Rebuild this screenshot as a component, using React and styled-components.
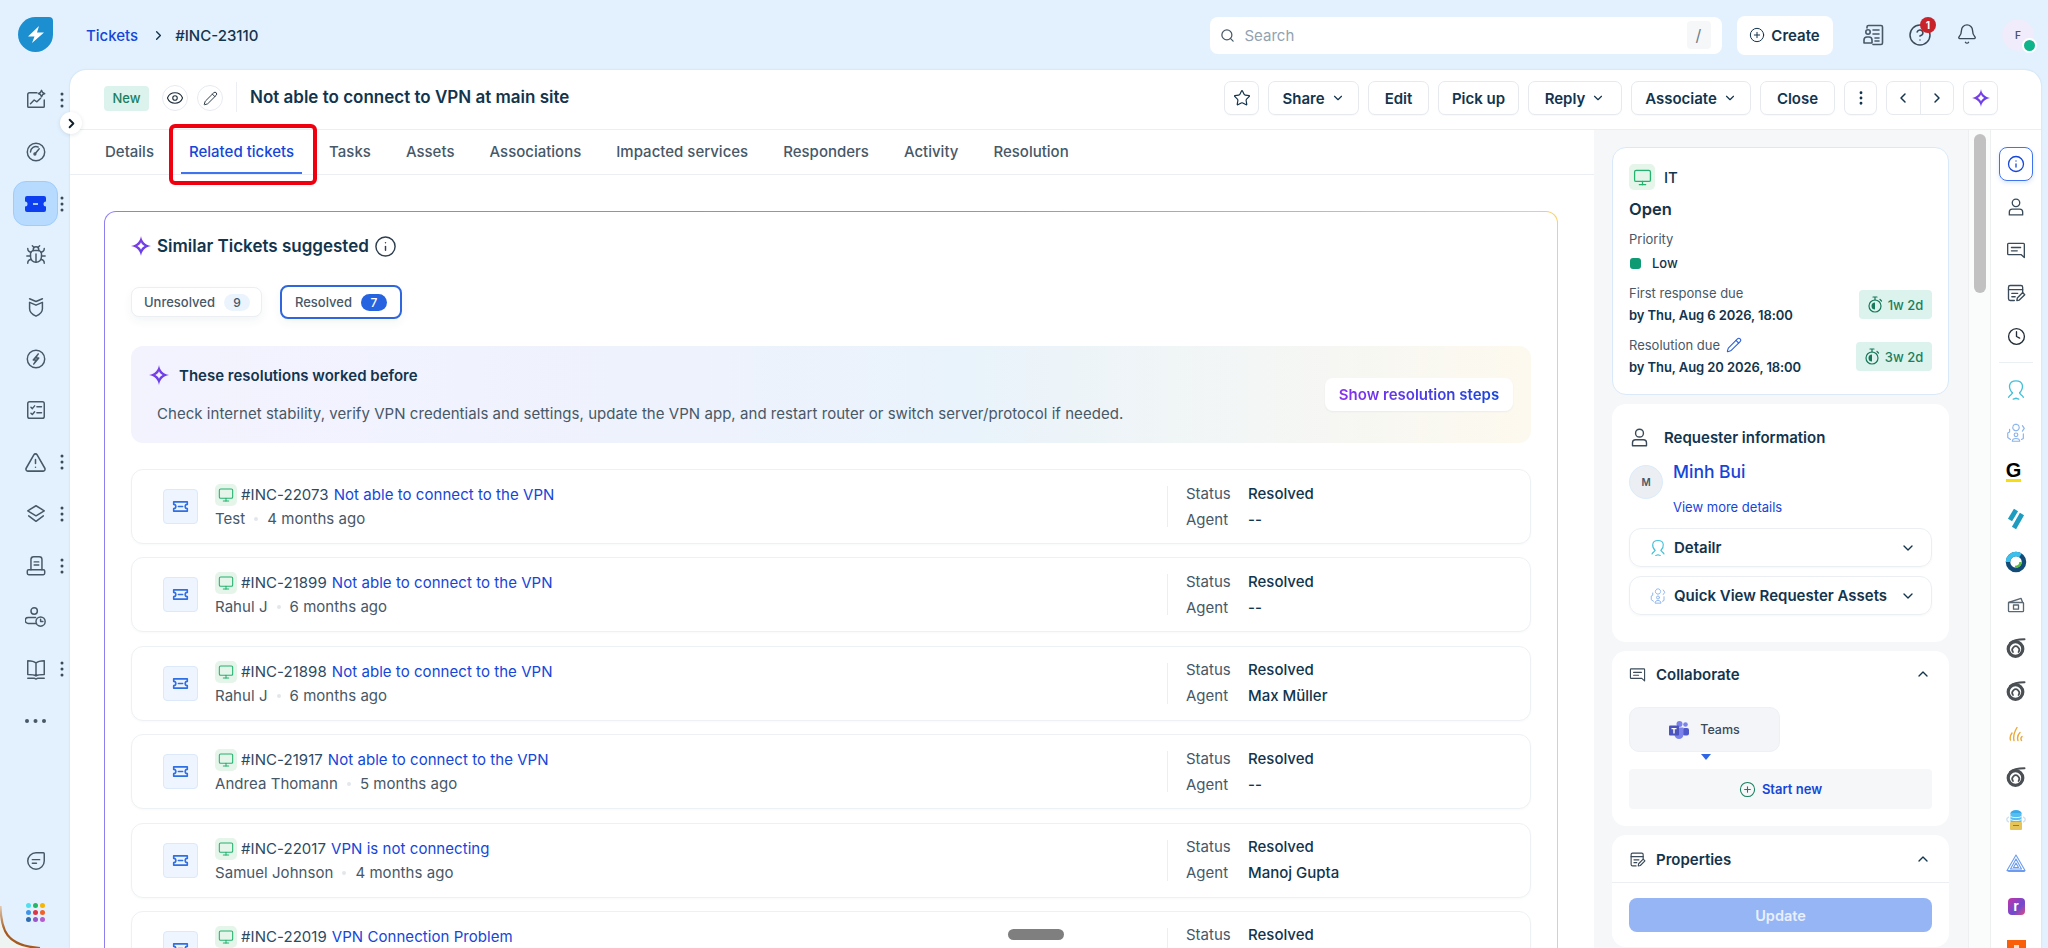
import styled, { createGlobalStyle } from 'styled-components'
import {
  Bug, TriangleAlert, Search, CirclePlus, HelpCircle, Bell, Star, ChevronDown, ChevronUp, ChevronLeft,
  ChevronRight, EllipsisVertical, Eye, Pencil, Info, Monitor, Clock,
} from 'lucide-react'

const INK = '#12344d'
const GREY = '#475867'
const LINK = '#1546d8'

const GlobalStyle = createGlobalStyle`
  html, body { margin: 0; padding: 0; }
  body { font-family: Inter, "Noto Sans", sans-serif; color: ${INK}; background: #e3f1fe; }
  * { box-sizing: border-box; }
`

const tickets = [
  { id: '#INC-22073', title: 'Not able to connect to the VPN', who: 'Test', when: '4 months ago', agent: '--' },
  { id: '#INC-21899', title: 'Not able to connect to the VPN', who: 'Rahul J', when: '6 months ago', agent: '--' },
  { id: '#INC-21898', title: 'Not able to connect to the VPN', who: 'Rahul J', when: '6 months ago', agent: 'Max Müller' },
  { id: '#INC-21917', title: 'Not able to connect to the VPN', who: 'Andrea Thomann', when: '5 months ago', agent: '--' },
  { id: '#INC-22017', title: 'VPN is not connecting', who: 'Samuel Johnson', when: '4 months ago', agent: 'Manoj Gupta' },
  { id: '#INC-22019', title: 'VPN Connection Problem' },
]

const tabs = ['Details', 'Related tickets', 'Tasks', 'Assets', 'Associations', 'Impacted services', 'Responders', 'Activity', 'Resolution']

const Svg = ({ size = 22, children, vb = '0 0 24 24', stroke = GREY, sw = 1.6 }) => (
  <svg width={size} height={size} viewBox={vb} fill="none" stroke={stroke} strokeWidth={sw} strokeLinecap="round" strokeLinejoin="round">
    {children}
  </svg>
)

const Logo = () => (
  <svg width="35" height="35" viewBox="0 0 35 35">
    <path d="M17.5 0H31a4 4 0 0 1 4 4v13.5A17.5 17.5 0 1 1 17.5 0z" fill="#1b8fd0" />
    <path d="M21 9L10 19.500h6.500l-2.500 6.500L26 15.500h-7z" fill="#fff" />
  </svg>
)

const ChartIcon = () => (
  <Svg><path d="M13 4H5a2 2 0 0 0-2 2v13a1 1 0 0 0 1 1h16a1 1 0 0 0 1-1v-7" /><path d="M6 16l4-4 3 2 4-4" /><path d="M18 1.500l1.200 2.300 2.300 1.200-2.300 1.200L18 8.500l-1.200-2.500L14.500 5l2.300-1.200z" /></Svg>
)
const GaugeIcon = () => (
  <Svg><circle cx="12" cy="12" r="9.500" /><path d="M6 12a6 6 0 0 1 8.500-5.400" /><path d="M15.500 8.500L11 14" /><circle cx="10.800" cy="14.200" r="1" /></Svg>
)
const ShieldIcon = () => (
  <Svg><path d="M5 3l7 3 7-3" /><path d="M5 7l7 3 7-3" /><path d="M5 7v7c0 4 3.500 6.500 7 8 3.500-1.500 7-4 7-8V7" /></Svg>
)
const BoltCircleIcon = () => (
  <Svg><circle cx="12" cy="12" r="9.500" /><path d="M14.500 6.500L9 13h3.500l-3 4.500L15 11h-3.500z" /></Svg>
)
const ChecksIcon = () => (
  <Svg><rect x="3" y="3" width="18" height="18" rx="2" /><path d="M6.500 9l1.500 1.500L10.500 7.500M6.500 15.500l1.500 1.500 2.500-3M13 8.500h5M13 15h5" /></Svg>
)
const LayersIcon = () => (
  <Svg><path d="M12 3l9 5.500-9 5.500-9-5.500z" /><path d="M4 14l8 6 8-6" /></Svg>
)
const ReceiptIcon = () => (
  <Svg><path d="M6.500 16V5a3 3 0 0 1 3-3h6a3 3 0 0 1 3 3v11" /><path d="M10 7.500h5M10 11h5" /><path d="M6.500 16H4a1.500 1.500 0 0 0-1.500 1.500V20A1.500 1.500 0 0 0 4 21.500h16a1.500 1.500 0 0 0 1.500-1.500v-2.500A1.500 1.500 0 0 0 20 16H6.500z" /></Svg>
)
const UserClockIcon = () => (
  <Svg><circle cx="10" cy="5.500" r="3.500" /><path d="M3.500 19h9M3.500 19a3 3 0 0 1 0-6.500h8" /><circle cx="17" cy="17" r="5" /><path d="M17 14.500V17h2.500" /></Svg>
)
const BookIcon = () => (
  <Svg><path d="M12 5.500C10 3.500 6 3 3 3v15c3 0 7 0 9 1.500 2-1.500 6-1.500 9-1.500V3c-3 0-7 .5-9 2.500zM12 5.500v14" /><path d="M3 22h7l2 1 2-1h7" /></Svg>
)
const FeedbackIcon = () => (
  <Svg><path d="M12 3h8a1 1 0 0 1 1 1v8a9 9 0 0 1-9 9 9 9 0 1 1 0-18z" /><path d="M8 10.500h8M8 14.500h4.500" /></Svg>
)
const PersonIcon = ({ size = 20, color = '#3a4a58' }) => (
  <Svg size={size} stroke={color}><circle cx="12" cy="7" r="4.500" /><path d="M4 21.500V18a3.500 3.500 0 0 1 3.500-3.500h9A3.500 3.500 0 0 1 20 18v3.500z" /></Svg>
)
const TicketLine = ({ size = 17, color = '#2f6fe4', sw = 1.9 }) => (
  <Svg size={size} vb="0 0 20 14" stroke={color} sw={sw}>
    <path d="M2 1.500h16v3a2.500 2.500 0 0 0 0 5v3H2v-3a2.500 2.500 0 0 0 0-5z" />
    <path d="M7.500 7h5" />
  </Svg>
)
const TicketSolid = () => (
  <svg width="21" height="16" viewBox="0 0 21 16">
    <path d="M2 0h17a2 2 0 0 1 2 2v3.500a2.500 2.500 0 0 0 0 5V14a2 2 0 0 1-2 2H2a2 2 0 0 1-2-2v-3.500a2.500 2.500 0 0 0 0-5V2a2 2 0 0 1 2-2z" fill="#0d3ff0" />
    <path d="M8 8h5" stroke="#b9dcff" strokeWidth="1.800" />
  </svg>
)
const Sparkle = ({ size = 20 }) => (
  <svg width={size} height={size} viewBox="0 0 20 20">
    <defs>
      <linearGradient id="spark" x1="0" y1="0" x2="1" y2="1">
        <stop offset="0" stopColor="#8a3fe0" />
        <stop offset="1" stopColor="#5a3ff0" />
      </linearGradient>
    </defs>
    <path fillRule="evenodd" fill="url(#spark)" d="M10 0c.7 5 4 8.800 10 10-6 1.200-9.300 5-10 10-.7-5-4-8.800-10-10 6-1.200 9.300-5 10-10zm0 6.200c-.7 1.700-2 3-3.700 3.800 1.700.8 3 2.100 3.700 3.800.7-1.700 2-3 3.700-3.800-1.700-.8-3-2.100-3.700-3.800z" />
  </svg>
)
const Dots = () => (
  <svg width="4" height="18" viewBox="0 0 4 18" fill="#3a4a58">
    <circle cx="2" cy="3" r="1.500" /><circle cx="2" cy="9" r="1.500" /><circle cx="2" cy="15" r="1.500" />
  </svg>
)
const MoreDots = () => (
  <svg width="24" height="6" viewBox="0 0 24 6" fill="#475867">
    <circle cx="3" cy="3" r="2" /><circle cx="11.500" cy="3" r="2" /><circle cx="20" cy="3" r="2" />
  </svg>
)
const AppsGrid = () => {
  const colours = ['#4ee0ee', '#22b866', '#f7b500', '#3f94e8', '#dc3545', '#f0622a', '#2e6cb0', '#9a55c8', '#b45cd0']
  return (
    <svg width="20" height="20" viewBox="0 0 20 20">
      {colours.map((c, i) => (
        <circle key={c} cx={2.5 + (i % 3) * 7} cy={2.5 + Math.floor(i / 3) * 7} r="2.500" fill={c} />
      ))}
    </svg>
  )
}
const ContactsIcon = () => (
  <Svg size={24}><circle cx="7" cy="9" r="2.200" /><path d="M3 20v-3a3 3 0 0 1 3-3h2a3 3 0 0 1 3 3v3z" /><path d="M6 5V4a1.500 1.500 0 0 1 1.500-1.500H20A1.500 1.500 0 0 1 21.500 4v16a1.500 1.500 0 0 1-1.500 1.500h-8" /><path d="M12 7h6M12 11h6M14 15h4M14 18h4" /></Svg>
)
const TimerMark = () => (
  <svg width="15" height="17" viewBox="0 0 15 17" fill="none" stroke="#17795a" strokeWidth="1.200">
    <circle cx="7" cy="10" r="6" />
    <path d="M7 6.500a3.500 3.500 0 0 0 0 7z" fill="#17795a" stroke="none" />
    <path d="M5 1h4M7 1v3M12 3.500l1.500 1.500" strokeLinecap="round" />
  </svg>
)
const NotesIcon = ({ size = 20, color = '#3a4a58' }) => (
  <Svg size={size} stroke={color}><path d="M20 11V5a2 2 0 0 0-2-2H5a2 2 0 0 0-2 2v14a2 2 0 0 0 2 2h5" /><path d="M3 8h17M7 12.500h7M7 16.500h4" /><path d="M13 21l.6-3L20 11.500l2.500 2.500-6.500 6.500z" /></Svg>
)
const ChatIcon = ({ size = 20, color = '#3a4a58' }) => (
  <Svg size={size} stroke={color}><path d="M3 4h18a1 1 0 0 1 1 1v16l-4-3.500H3a1 1 0 0 1-1-1V5a1 1 0 0 1 1-1z" /><path d="M6.500 9h11M6.500 13h7" /></Svg>
)
const TeamsMark = () => (
  <svg width="20" height="18" viewBox="0 0 20 18">
    <circle cx="16.500" cy="3.500" r="2.300" fill="#7b83eb" />
    <rect x="13.500" y="7" width="6.500" height="7.500" rx="2" fill="#5059c9" />
    <circle cx="10.500" cy="3" r="3" fill="#7b83eb" />
    <path d="M5.500 6.500h9v7a4.500 4.500 0 0 1-9 0z" fill="#7b83eb" />
    <rect x="0" y="4.500" width="10" height="10" rx="1" fill="#4b53bc" />
    <path d="M2.500 7h5v1.300H5.700v4.300H4.300V8.300H2.500z" fill="#fff" />
  </svg>
)
const DetailrMark = ({ size = 22 }) => (
  <Svg size={size} stroke="#45c0d8" sw={1.500}><path d="M8 15c-2-2-3.500-4.500-3-8 .5-3 3.500-5 7-5s6.500 2 7 5c.5 3.500-1 6-3 8" /><path d="M8 15c0 2-3 2.500-4 5M16 15c0 2 3 2.500 4 5M9 22l3-1 3 1" /></Svg>
)
const QuickViewMark = ({ size = 22 }) => (
  <Svg size={size} stroke="#8bb5ee" sw={1.300}>
    <circle cx="12" cy="6" r="3.500" strokeDasharray="2 1" /><circle cx="12" cy="14" r="2" /><path d="M8 21c0-2 2-3 4-3s4 1 4 3z" /><path d="M5 8v3l-2 1v5l3 2M19 4l2 3-2 3M20 13v5l-2 1" />
  </Svg>
)
const StripesMark = () => (
  <svg width="18" height="22" viewBox="0 0 18 22" stroke="#1d9cc0" strokeWidth="4.800">
    <line x1="9" y1="2" x2="3" y2="12" />
    <line x1="15" y1="6" x2="7" y2="20" />
  </svg>
)
const RingMark = () => (
  <svg width="22" height="22" viewBox="0 0 22 22" fill="none">
    <circle cx="11" cy="11" r="8" stroke="#124a78" strokeWidth="4.500" />
    <path d="M3 11a8 8 0 0 1 12.500-6.600" stroke="#3bc0ec" strokeWidth="4.500" />
    <path d="M10 16c3 0 5.500-2 5.500-5" stroke="#5dbb46" strokeWidth="2.500" />
  </svg>
)
const BoxTicketMark = () => (
  <Svg size={20} stroke="#5a6672"><path d="M3 9l15-5 2 5" /><rect x="3" y="9" width="18" height="11" rx="1" /><rect x="9" y="12" width="6" height="5" /></Svg>
)
const SpiralMark = () => (
  <svg width="20" height="20" viewBox="0 0 20 20" fill="none" stroke="#4a4f54" strokeLinecap="round">
    <circle cx="9.500" cy="11" r="7.300" strokeWidth="3.200" />
    <path d="M18.500 1.300C13 1.300 8 1.500 4 5" strokeWidth="2" />
    <path d="M7 14a3.500 3.500 0 1 1 5.500 0" strokeWidth="1.700" />
  </svg>
)
const WavesMark = () => (
  <svg width="14" height="16" viewBox="0 0 14 16" fill="none" stroke="#eaa93c" strokeWidth="1.400" strokeLinecap="round">
    <path d="M1.500 14c-1-3 0-5 1.500-7M5 14.500c-1-4 0-8 3-13M9 14.500c-1-3 0-6 2-8M12.500 14.500c-1-1.500-.5-3 .5-4" />
  </svg>
)
const DbMark = () => (
  <svg width="22" height="22" viewBox="0 0 22 22">
    <ellipse cx="11" cy="4" rx="5.500" ry="3" fill="#3aa9e8" />
    <rect x="5.500" y="4" width="11" height="9" fill="#56bdf0" />
    <path d="M5.500 7.500c2 1.500 9 1.500 11 0M5.500 10.500c2 1.500 9 1.500 11 0" stroke="#e6f5fd" fill="none" />
    <rect x="5" y="13" width="12" height="8" rx="1" fill="#e5c45a" />
    <path d="M8 16.500h6" stroke="#9a7d22" />
    <path d="M4 8c-3 1-3 4 0 5M18 8c3 1 3 4 0 5" stroke="#d5e2ec" fill="none" strokeWidth="1.500" />
  </svg>
)
const PrismMark = () => (
  <svg width="20" height="18" viewBox="0 0 20 18" fill="none" stroke="#6c9cf0" strokeWidth="1.100" strokeLinejoin="round">
    <path d="M10 1L1 16.500h18z" /><path d="M10 5L4.500 15h11z" /><path d="M10 9l-2.500 4.500h5z" /><path d="M1 16.500l2 1h15l1-1" />
  </svg>
)

const Page = styled.div`
  position: relative;
  height: 948px;
  overflow: hidden;
  background: #e3f1fe;
`

const TopBar = styled.header`
  height: 70px;
  display: flex;
  align-items: center;
  padding-right: 14px;
`

const LogoSlot = styled.div`
  width: 70px;
  margin-top: -2px;
  display: flex;
  justify-content: center;
`

const Crumbs = styled.nav`
  display: flex;
  align-items: center;
  margin-left: 16px;
  font-size: 15px;
  font-weight: 500;
  a { color: ${LINK}; }
  span { color: ${INK}; }
  svg { margin: 0 9px 0 13px; }
`

const SearchBox = styled.div`
  width: 512px;
  height: 37px;
  margin-left: auto;
  background: #fff;
  border-radius: 8px;
  display: flex;
  align-items: center;
  padding: 0 11px 0 10px;
  gap: 10px;
  font-size: 15px;
  color: #92a2b1;
`

const SlashKey = styled.kbd`
  margin-left: auto;
  width: 24px;
  height: 28px;
  border-radius: 4px;
  background: #f5f7f9;
  display: flex;
  align-items: center;
  justify-content: center;
  font-family: Inter, sans-serif;
  font-size: 16px;
  color: #6f7c87;
`

const CreateBtn = styled.button`
  width: 96px;
  height: 39px;
  margin: 0 28px 0 15px;
  border: 0;
  border-radius: 8px;
  background: #fff;
  color: ${INK};
  display: flex;
  align-items: center;
  justify-content: center;
  gap: 6px;
  font: 600 15px Inter, sans-serif;
`

const TopIcon = styled.div`
  position: relative;
  width: 24px;
  height: 24px;
  margin-right: 23.500px;
  color: #3a4a58;
`

const NoticeDot = styled.span`
  position: absolute;
  top: -6px;
  left: 12px;
  width: 16px;
  height: 16px;
  border-radius: 50%;
  background: #c8232a;
  color: #fff;
  font-size: 10px;
  font-weight: 700;
  line-height: 16px;
  text-align: center;
`

const Avatar = styled.div`
  position: relative;
  width: ${p => p.$size}px;
  height: ${p => p.$size}px;
  margin: ${p => p.$margin || 0};
  flex: none;
  border-radius: 50%;
  background: ${p => p.$bg};
  border: 1px solid ${p => p.$line};
  display: flex;
  align-items: center;
  justify-content: center;
  font-size: 10px;
  font-weight: 600;
  color: #475867;
`

const OnlineDot = styled.span`
  position: absolute;
  right: -4px;
  bottom: -3px;
  width: 15px;
  height: 15px;
  border-radius: 50%;
  background: #10b48a;
  border: 2px solid #fff;
`

const Body = styled.div`
  position: relative;
  display: flex;
  height: 878px;
`

const LeftRail = styled.aside`
  width: 70px;
  flex: none;
  padding: 4.500px 0 9px;
  display: flex;
  flex-direction: column;
`

const RailItem = styled.div`
  height: 51.700px;
  display: flex;
  align-items: center;
  padding-left: 13px;
  margin-top: ${p => (p.$push ? 'auto' : 0)};
`

const RailIcon = styled.div`
  width: 45px;
  height: 45px;
  display: flex;
  align-items: center;
  justify-content: center;
  border-radius: 13px;
  background: ${p => (p.$active ? '#b7dbff' : 'transparent')};
  border: 1px solid ${p => (p.$active ? '#9fccfa' : 'transparent')};
`

const Kebab = styled.div`
  display: flex;
  margin-left: 2px;
`

const Panel = styled.main`
  flex: 1;
  margin-right: 7px;
  background: #fff;
  border-radius: 16px 16px 0 0;
  box-shadow: 0 0 2px rgba(18, 52, 77, 0.16);
  display: flex;
  flex-direction: column;
  overflow: hidden;
`

const CollapseTab = styled.button`
  position: absolute;
  top: 42px;
  left: 60px;
  width: 22px;
  height: 22px;
  border: 0;
  padding: 0;
  border-radius: 50%;
  background: #fff;
  color: #12202c;
  box-shadow: 0 1px 4px rgba(18, 52, 77, 0.12);
  display: flex;
  align-items: center;
  justify-content: center;
`

const TicketHead = styled.div`
  height: 60px;
  flex: none;
  display: flex;
  align-items: center;
  padding: 0 43px 3px 34px;
  border-bottom: 1px solid #ebeff3;
`

const StatusPill = styled.span`
  width: 45px;
  height: 25px;
  border-radius: 4px;
  background: #dcf2ec;
  color: #1a7f5f;
  font-size: 13px;
  font-weight: 500;
  display: flex;
  align-items: center;
  justify-content: center;
  margin-right: 13px;
`

const RoundBtn = styled.button`
  width: 26px;
  height: 26px;
  margin-right: 9px;
  padding: 0;
  border-radius: 50%;
  border: 1px solid #e6eaef;
  background: #fff;
  color: #1f2f3d;
  display: flex;
  align-items: center;
  justify-content: center;
`

const TicketTitle = styled.h1`
  margin: -2px 0 0 4px;
  padding-left: 13px;
  border-left: 1px solid #ebeff3;
  font-size: 17px;
  font-weight: 600;
  line-height: 30px;
  color: ${INK};
`

const Actions = styled.div`
  margin-left: auto;
  display: flex;
  gap: 9px;
`

const ActionBtn = styled.button`
  width: ${p => p.$w}px;
  height: 34px;
  padding: 0;
  border: 1px solid #e6eaef;
  border-radius: 7px;
  background: #fff;
  color: ${INK};
  font: 600 15px Inter, sans-serif;
  display: flex;
  align-items: center;
  justify-content: center;
  gap: 6px;
  box-shadow: 0 1px 1px rgba(18, 52, 77, 0.03);
`

const SplitBtn = styled.div`
  width: 68px;
  height: 34px;
  border: 1px solid #e6eaef;
  border-radius: 7px;
  display: flex;
  color: ${INK};
  div {
    flex: 1;
    display: flex;
    align-items: center;
    justify-content: center;
  }
  div + div { border-left: 1px solid #e6eaef; }
`

const Split = styled.div`
  flex: 1;
  display: flex;
  min-height: 0;
`

const MainCol = styled.section`
  width: 1524px;
  flex: none;
`

const TabBar = styled.div`
  height: 45px;
  padding-left: 27px;
  display: flex;
  gap: 19px;
  border-bottom: 1px solid #ebeff3;
`

const Tab = styled.div`
  position: relative;
  padding: 0 8px;
  height: 44px;
  display: flex;
  align-items: center;
  font-size: 15px;
  font-weight: 500;
  color: ${p => (p.$active ? LINK : GREY)};
  border-bottom: 2px solid ${p => (p.$active ? '#3f74ee' : 'transparent')};
  margin-bottom: -1px;
`

const RedMark = styled.span`
  position: absolute;
  top: -6px;
  left: -12px;
  width: 148px;
  height: 61px;
  border: 4px solid #f0000f;
  border-radius: 6px;
  pointer-events: none;
`

const Content = styled.div`
  padding: 36px 36px 0 34px;
`

const SuggestCard = styled.div`
  padding: 22px 26px 0;
  border: 1px solid transparent;
  border-bottom: 0;
  border-radius: 12px 12px 0 0;
  background:
    linear-gradient(#fff, #fff) padding-box,
    linear-gradient(90deg, #8d7ff2, #6f9cf0 60%, #f7d266 100%) border-box;
`

const SuggestHead = styled.div`
  height: 24px;
  display: flex;
  align-items: center;
  gap: 5px;
  font-size: 17px;
  font-weight: 600;
  svg:first-child { margin-right: 1px; }
`

const Filters = styled.div`
  height: 34px;
  margin-top: 27px;
  display: flex;
  align-items: center;
  gap: 18px;
`

const FilterChip = styled.div`
  height: ${p => (p.$active ? 34 : 30)}px;
  padding: ${p => (p.$active ? '0 13px' : '0 11px 0 12px')};
  border-radius: 8px;
  border: ${p => (p.$active ? '2px solid #2f66dd' : '1px solid #ebeff3')};
  background: #fff;
  display: flex;
  align-items: center;
  gap: 9px;
  font-size: 13px;
  font-weight: 500;
  color: ${GREY};
  box-shadow: 0 4px 10px rgba(18, 52, 77, 0.05);
`

const Count = styled.span`
  width: 26px;
  height: 17px;
  border-radius: 9px;
  background: ${p => (p.$active ? '#2563e0' : '#ebf4fd')};
  color: ${p => (p.$active ? '#fff' : GREY)};
  font-size: 12px;
  font-weight: 500;
  display: flex;
  align-items: center;
  justify-content: center;
`

const Banner = styled.div`
  margin-top: 27px;
  height: 97px;
  border-radius: 12px;
  padding: 17px 18px 0;
  position: relative;
  background: linear-gradient(90deg, #f3f3fe 0%, #eef2fd 40%, #e9f3fb 60%, #f3f6f5 80%, #fdf9ee 100%);
`

const BannerHead = styled.div`
  display: flex;
  align-items: center;
  gap: 10px;
  font-size: 15px;
  font-weight: 600;
  height: 24px;
`

const BannerText = styled.p`
  margin: 16px 0 0 8px;
  font-size: 15px;
  letter-spacing: 0.045px;
  line-height: 22px;
  color: ${GREY};
`

const ResolutionBtn = styled.button`
  position: absolute;
  top: 32px;
  right: 18px;
  width: 188px;
  height: 33px;
  padding: 0;
  border: 0;
  border-radius: 8px;
  background: #fff;
  box-shadow: 0 1px 2px rgba(18, 52, 77, 0.06);
  font: 600 15px Inter, sans-serif;
  span {
    background: linear-gradient(90deg, #8a30f0, #1546d8);
    -webkit-background-clip: text;
    background-clip: text;
    color: transparent;
  }
`

const TicketList = styled.div`
  margin-top: 26px;
  display: flex;
  flex-direction: column;
  gap: 13.400px;
`

const TicketRow = styled.article`
  height: 75px;
  flex: none;
  display: flex;
  align-items: center;
  padding-left: 31px;
  border: 1px solid #eef1f4;
  border-radius: 12px;
  background: #fff;
  box-shadow: 0 1px 2px rgba(18, 52, 77, 0.03);
`

const TicketBox = styled.div`
  width: 35px;
  height: 35px;
  flex: none;
  margin-right: 17px;
  border-radius: 4px;
  background: #eef5fe;
  border: 1px solid #dbe9fb;
  display: flex;
  align-items: center;
  justify-content: center;
`

const RowText = styled.div`
  flex: 1;
  align-self: flex-start;
  padding-top: 13px;
  font-size: 15px;
  letter-spacing: 0.05px;
  line-height: 24px;
`

const RowTitle = styled.div`
  display: flex;
  align-items: center;
  gap: 4px;
  color: #2d4a62;
  a { color: ${LINK}; margin-left: 1px; }
`

const ItTag = styled.span`
  width: ${p => p.$size}px;
  height: ${p => p.$size}px;
  flex: none;
  border-radius: 5px;
  background: #e5f5ea;
  display: flex;
  align-items: center;
  justify-content: center;
  color: #24b26f;
`

const RowMeta = styled.div`
  display: flex;
  align-items: center;
  color: ${GREY};
  i {
    width: 4px;
    height: 4px;
    margin: 0 9px;
    border-radius: 50%;
    background: #e3e7ec;
  }
`

const StatusCol = styled.div`
  width: 363px;
  height: 41px;
  flex: none;
  padding-left: 18px;
  border-left: 1px solid #ebeff3;
  display: grid;
  grid-template-columns: 62px 1fr;
  grid-auto-rows: 26px;
  align-content: center;
  font-size: 15px;
  line-height: 26px;
  color: ${GREY};
  b { font-weight: 500; color: ${INK}; }
`

const SideCol = styled.aside`
  width: 374px;
  flex: none;
  padding: 17px 19px 0 18px;
  background: #f5f7f9;
  display: flex;
  flex-direction: column;
  gap: 9px;
`

const SideCard = styled.div`
  flex: none;
  background: #fff;
  border-radius: 14px;
  border: ${p => (p.$outlined ? '1px solid #d9e9fa' : '0')};
  padding: ${p => p.$pad};
`

const ItRow = styled.div`
  display: flex;
  align-items: center;
  gap: 9px;
  font-size: 15px;
  font-weight: 500;
`

const OpenText = styled.div`
  margin-top: 5px;
  font-size: 16.500px;
  font-weight: 600;
  line-height: 28px;
`

const SmallLabel = styled.div`
  margin-top: ${p => p.$mt || 0}px;
  font-size: 13px;
  line-height: 20px;
  color: ${GREY};
  display: flex;
  align-items: center;
  gap: 6px;
`

const PriorityRow = styled.div`
  margin-top: 4px;
  display: flex;
  align-items: center;
  gap: 11px;
  font-size: 13px;
  font-weight: 500;
  line-height: 20px;
  i {
    width: 11px;
    height: 11px;
    margin-left: 1px;
    border-radius: 3px;
    background: #0e9a72;
  }
`

const SlaRow = styled.div`
  margin-top: ${p => p.$mt}px;
  display: flex;
  align-items: center;
  justify-content: space-between;
`

const DueDate = styled.div`
  margin-top: 1px;
  font-size: 13px;
  font-weight: 600;
  letter-spacing: -0.080px;
  line-height: 22px;
`

const SlaBadge = styled.div`
  width: ${p => p.$w}px;
  height: 29px;
  border-radius: 4px;
  background: #dcf2ec;
  color: #1a7f5f;
  font-size: 13px;
  font-weight: 500;
  display: flex;
  align-items: center;
  justify-content: center;
  gap: 5px;
`

const CardTitle = styled.div`
  display: flex;
  align-items: center;
  height: 24px;
  gap: ${p => p.$gap}px;
  font-size: 15px;
  font-weight: 600;
  svg:last-child:not(:first-child) { margin-left: auto; margin-right: 1px; }
`

const RequesterRow = styled.div`
  margin-top: 11px;
  display: flex;
  gap: 10px;
`

const RequesterName = styled.a`
  display: block;
  font-size: 17.500px;
  font-weight: 500;
  line-height: 24px;
  color: ${LINK};
`

const MoreLink = styled.a`
  display: block;
  margin-top: 13px;
  font-size: 13px;
  line-height: 20px;
  color: ${LINK};
`

const Expander = styled.div`
  height: ${p => p.$h}px;
  margin-top: ${p => p.$mt}px;
  border: 1px solid #ebeff3;
  border-radius: 12px;
  padding: 0 15px 0 19px;
  display: flex;
  align-items: center;
  gap: 7px;
  font-size: 15px;
  font-weight: 600;
  box-shadow: 0 1px 2px rgba(18, 52, 77, 0.04);
  svg:last-child { margin-left: auto; }
`

const TeamsTile = styled.div`
  position: relative;
  width: 151px;
  height: 45px;
  margin-top: 21px;
  border-radius: 10px;
  border: 1px solid #eef1f4;
  background: #f3f5f8;
  display: flex;
  align-items: center;
  justify-content: center;
  gap: 11px;
  font-size: 12.500px;
  font-weight: 500;
  color: #3a4a58;
  &::after {
    content: '';
    position: absolute;
    left: 71px;
    top: 46px;
    border: 5px solid transparent;
    border-top: 6px solid #2f66e8;
    border-bottom: 0;
  }
`

const StartNew = styled.div`
  height: 40px;
  margin-top: 17px;
  border-radius: 4px;
  background: #f5f7f9;
  display: flex;
  align-items: center;
  justify-content: center;
  gap: 6px;
  font-size: 13px;
  font-weight: 600;
  color: ${LINK};
`

const PropsHead = styled.div`
  padding: 12px 17px 11px;
  border-bottom: 1px solid #ebeff3;
`

const UpdateBtn = styled.button`
  display: block;
  width: 303px;
  height: 34px;
  margin: 15px 17px;
  border: 0;
  border-radius: 8px;
  background: #95b5f5;
  color: #e9f0fd;
  font: 600 14.500px Inter, sans-serif;
`

const ScrollTrack = styled.div`
  width: 22px;
  flex: none;
  padding: 4px 5px 0;
  background: #fafbfb;
  border-left: 1px solid #edeff1;
`

const ScrollThumb = styled.div`
  width: 12px;
  height: 159px;
  border-radius: 6px;
  background: #c1c1c1;
`

const IconRail = styled.nav`
  flex: 1;
  padding-top: 17px;
  display: flex;
  flex-direction: column;
  align-items: center;
  background: #fff;
  border-left: 1px solid #edeff1;
`

const IconBtn = styled.div`
  flex: none;
  width: 34px;
  height: ${p => (p.$active ? 34 : 43)}px;
  margin-bottom: ${p => (p.$active ? 4.5 : 0)}px;
  border-radius: 8px;
  border: ${p => (p.$active ? '1px solid #3f74ee' : '0')};
  box-shadow: ${p => (p.$active ? '0 2px 4px rgba(63, 116, 238, 0.18)' : 'none')};
  display: flex;
  align-items: center;
  justify-content: center;
`

const RailSep = styled.div`
  width: 34px;
  height: 1px;
  flex: none;
  margin: 4px 0 6px;
  background: #ebeff3;
`

const GrammarMark = styled.div`
  font-family: "Liberation Sans", sans-serif;
  font-size: 20px;
  font-weight: 700;
  line-height: 17px;
  color: #000;
  margin-left: -5px;
  margin-top: -8px;
  border-bottom: 3px solid #f5dc15;
`

const RoundedMark = styled.div`
  width: 17px;
  height: 17px;
  border-radius: 4px;
  background: linear-gradient(135deg, #c532a8, #6d4bd0 60%, #e04a80);
  color: #fff;
  font: 700 14px/17px "Liberation Sans", sans-serif;
  text-align: center;
`

const OrangeMark = styled.div`
  width: 19px;
  height: 19px;
  background: #f95f0a;
  display: flex;
  justify-content: center;
  padding-top: 5px;
  &::after {
    content: '';
    width: 5px;
    height: 5px;
    background: #fde0cc;
  }
`

const WallpaperCorner = styled.svg`
  position: absolute;
  left: 0;
  bottom: 0;
`

const GrabHandle = styled.div`
  position: absolute;
  left: 1008px;
  top: 929px;
  width: 56px;
  height: 11px;
  border-radius: 6px;
  background: #7f7f7f;
`

const App = () => {
  const railTop = [
    { icon: <ChartIcon />, more: true },
    { icon: <GaugeIcon /> },
    { icon: <TicketSolid />, more: true, active: true },
    { icon: <Bug size={22} color={GREY} strokeWidth={1.6} /> },
    { icon: <ShieldIcon /> },
    { icon: <BoltCircleIcon /> },
    { icon: <ChecksIcon /> },
    { icon: <TriangleAlert size={23} color={GREY} strokeWidth={1.6} />, more: true },
    { icon: <LayersIcon />, more: true },
    { icon: <ReceiptIcon />, more: true },
    { icon: <UserClockIcon /> },
    { icon: <BookIcon />, more: true },
    { icon: <MoreDots /> },
  ]

  const brandIcons = [
    <DetailrMark key="d" />, <QuickViewMark key="q" />, <GrammarMark key="g">G</GrammarMark>, <StripesMark key="s" />,
    <RingMark key="r" />, <BoxTicketMark key="b" />, <SpiralMark key="s1" />, <SpiralMark key="s2" />, <WavesMark key="w" />,
    <SpiralMark key="s3" />, <DbMark key="db" />, <PrismMark key="p" />, <RoundedMark key="rm">r</RoundedMark>, <OrangeMark key="o" />,
  ]

  return (
    <Page>
      <GlobalStyle />
      <TopBar>
        <LogoSlot><Logo /></LogoSlot>
        <Crumbs>
          <a>Tickets</a>
          <ChevronRight size={15} color={INK} strokeWidth={2.2} />
          <span>#INC-23110</span>
        </Crumbs>
        <SearchBox>
          <Search size={15} color={GREY} />
          Search
          <SlashKey>/</SlashKey>
        </SearchBox>
        <CreateBtn><CirclePlus size={16} strokeWidth={1.5} />Create</CreateBtn>
        <TopIcon><ContactsIcon /></TopIcon>
        <TopIcon>
          <HelpCircle size={24} strokeWidth={1.5} color="#3a4a58" />
          <NoticeDot>1</NoticeDot>
        </TopIcon>
        <TopIcon><Bell size={22} strokeWidth={1.5} /></TopIcon>
        <Avatar $size={32} $bg="#f0ecfb" $line="#f0ecfb" $margin="0 0 0 -1px">F<OnlineDot /></Avatar>
      </TopBar>

      <Body>
        <LeftRail>
          {railTop.map((item, i) => (
            <RailItem key={i}>
              <RailIcon $active={item.active}>{item.icon}</RailIcon>
              {item.more && <Kebab><Dots /></Kebab>}
            </RailItem>
          ))}
          <RailItem $push><RailIcon><FeedbackIcon /></RailIcon></RailItem>
          <RailItem><RailIcon><AppsGrid /></RailIcon></RailItem>
        </LeftRail>

        <Panel>
          <TicketHead>
            <StatusPill>New</StatusPill>
            <RoundBtn><Eye size={18} strokeWidth={1.5} /></RoundBtn>
            <RoundBtn><Pencil size={15} strokeWidth={1.5} /></RoundBtn>
            <TicketTitle>Not able to connect to VPN at main site</TicketTitle>
            <Actions>
              <ActionBtn $w={35}><Star size={18} strokeWidth={1.6} /></ActionBtn>
              <ActionBtn $w={91}>Share<ChevronDown size={14} strokeWidth={2} /></ActionBtn>
              <ActionBtn $w={61}>Edit</ActionBtn>
              <ActionBtn $w={81}>Pick up</ActionBtn>
              <ActionBtn $w={94}>Reply<ChevronDown size={14} strokeWidth={2} /></ActionBtn>
              <ActionBtn $w={120}>Associate<ChevronDown size={14} strokeWidth={2} /></ActionBtn>
              <ActionBtn $w={75}>Close</ActionBtn>
              <ActionBtn $w={33}><EllipsisVertical size={18} strokeWidth={1.8} /></ActionBtn>
              <SplitBtn>
                <div><ChevronLeft size={16} strokeWidth={2.2} /></div>
                <div><ChevronRight size={16} strokeWidth={2.2} /></div>
              </SplitBtn>
              <ActionBtn $w={35}><Sparkle size={18} /></ActionBtn>
            </Actions>
          </TicketHead>

          <Split>
            <MainCol>
              <TabBar>
                {tabs.map(t => (
                  <Tab key={t} $active={t === 'Related tickets'}>
                    {t}
                    {t === 'Related tickets' && <RedMark />}
                  </Tab>
                ))}
              </TabBar>
              <Content>
                <SuggestCard>
                  <SuggestHead>
                    <Sparkle size={20} />
                    Similar Tickets suggested
                    <Info size={23} strokeWidth={1.5} color="#2d3e4e" />
                  </SuggestHead>
                  <Filters>
                    <FilterChip>Unresolved<Count>9</Count></FilterChip>
                    <FilterChip $active>Resolved<Count $active>7</Count></FilterChip>
                  </Filters>
                  <Banner>
                    <BannerHead><Sparkle size={20} />These resolutions worked before</BannerHead>
                    <BannerText>Check internet stability, verify VPN credentials and settings, update the VPN app, and restart router or switch server/protocol if needed.</BannerText>
                    <ResolutionBtn><span>Show resolution steps</span></ResolutionBtn>
                  </Banner>
                  <TicketList>
                    {tickets.map(t => (
                      <TicketRow key={t.id}>
                        <TicketBox><TicketLine /></TicketBox>
                        <RowText>
                          <RowTitle>
                            <ItTag $size={22}><Monitor size={16} strokeWidth={1.6} /></ItTag>
                            {t.id}
                            <a>{t.title}</a>
                          </RowTitle>
                          {t.who && <RowMeta>{t.who}<i />{t.when}</RowMeta>}
                        </RowText>
                        <StatusCol>
                          <span>Status</span><b>Resolved</b>
                          <span>{t.agent && 'Agent'}</span><b>{t.agent}</b>
                        </StatusCol>
                      </TicketRow>
                    ))}
                  </TicketList>
                </SuggestCard>
              </Content>
            </MainCol>

            <SideCol>
              <SideCard $outlined $pad="16px 16px 16px">
                <ItRow>
                  <ItTag $size={26}><Monitor size={19} strokeWidth={1.6} /></ItTag>
                  IT
                </ItRow>
                <OpenText>Open</OpenText>
                <SmallLabel $mt={6}>Priority</SmallLabel>
                <PriorityRow><i />Low</PriorityRow>
                <SlaRow $mt={10}>
                  <div>
                    <SmallLabel>First response due</SmallLabel>
                    <DueDate>by Thu, Aug 6 2026, 18:00</DueDate>
                  </div>
                  <SlaBadge $w={73}><TimerMark />1w 2d</SlaBadge>
                </SlaRow>
                <SlaRow $mt={9}>
                  <div>
                    <SmallLabel>Resolution due<Pencil size={16} color="#2b5fd9" strokeWidth={1.6} /></SmallLabel>
                    <DueDate>by Thu, Aug 20 2026, 18:00</DueDate>
                  </div>
                  <SlaBadge $w={76}><TimerMark />3w 2d</SlaBadge>
                </SlaRow>
              </SideCard>

              <SideCard $pad="21px 17px 27px">
                <CardTitle $gap={14}>
                  <PersonIcon size={21} />
                  Requester information
                </CardTitle>
                <RequesterRow>
                  <Avatar $size={34} $bg="#ebeff3" $line="#dcebfb" $margin="5px 0 0">M</Avatar>
                  <div>
                    <RequesterName>Minh Bui</RequesterName>
                    <MoreLink>View more details</MoreLink>
                  </div>
                </RequesterRow>
                <Expander $h={39} $mt={11}>
                  <DetailrMark size={18} />Detailr<ChevronDown size={16} strokeWidth={2} />
                </Expander>
                <Expander $h={39} $mt={9}>
                  <QuickViewMark size={18} />Quick View Requester Assets<ChevronDown size={16} strokeWidth={2} />
                </Expander>
              </SideCard>

              <SideCard $pad="11px 17px 17px">
                <CardTitle $gap={10}>
                  <ChatIcon size={17} />
                  Collaborate
                  <ChevronUp size={16} strokeWidth={2} />
                </CardTitle>
                <TeamsTile><TeamsMark />Teams</TeamsTile>
                <StartNew><CirclePlus size={17} color="#1a7f5f" strokeWidth={1.5} />Start new</StartNew>
              </SideCard>

              <SideCard $pad="0">
                <PropsHead>
                  <CardTitle $gap={10}>
                    <NotesIcon size={17} />
                    Properties
                    <ChevronUp size={16} strokeWidth={2} />
                  </CardTitle>
                </PropsHead>
                <UpdateBtn>Update</UpdateBtn>
              </SideCard>
            </SideCol>

            <ScrollTrack><ScrollThumb /></ScrollTrack>

            <IconRail>
              <IconBtn $active><Info size={18} color="#1546d8" strokeWidth={1.7} /></IconBtn>
              <IconBtn><PersonIcon /></IconBtn>
              <IconBtn><ChatIcon /></IconBtn>
              <IconBtn><NotesIcon /></IconBtn>
              <IconBtn><Clock size={19} color="#222d38" strokeWidth={1.7} /></IconBtn>
              <RailSep />
              {brandIcons.map((icon, i) => <IconBtn key={i}>{icon}</IconBtn>)}
            </IconRail>
          </Split>
        </Panel>
        <CollapseTab><ChevronRight size={15} strokeWidth={3} /></CollapseTab>
      </Body>

      <WallpaperCorner width="42" height="42" viewBox="0 0 42 42">
        <defs>
          <linearGradient id="cornerEdge" x1="0" y1="0" x2="0" y2="1">
            <stop offset="0" stopColor="#e3c9b0" />
            <stop offset="0.6" stopColor="#a75a1e" />
            <stop offset="1" stopColor="#a75a1e" />
          </linearGradient>
        </defs>
        <path d="M0 0C1 24 6 40 40 42H0z" fill="#eef4f1" />
        <path d="M.5 0C1 24 6 40 40 42" fill="none" stroke="url(#cornerEdge)" strokeWidth="2.200" />
      </WallpaperCorner>
      <GrabHandle />
    </Page>
  )
}

export default App
